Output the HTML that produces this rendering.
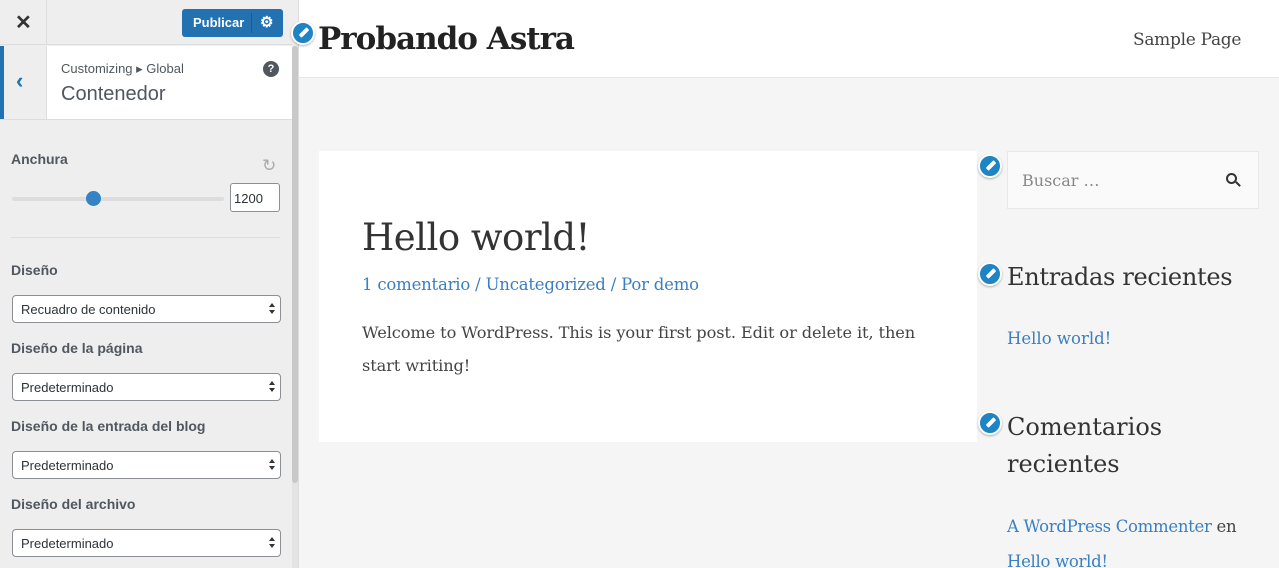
<!DOCTYPE html>
<html style="overflow:hidden;height:568px"><head><meta charset="utf-8"><style>
*{box-sizing:border-box;margin:0;padding:0}
body{width:1279px;height:568px;overflow:hidden;position:relative;font-family:"Liberation Sans",sans-serif;background:#f5f5f5}
.a{position:absolute}
.side{left:0;top:0;width:299px;height:568px;background:#eee;border-right:1px solid #ddd}
.lbl{position:absolute;left:11px;font-size:14px;font-weight:bold;color:#50575e}
.sel{position:absolute;left:12px;width:269px;height:28px;background:#fff;border:1px solid #8c8f94;border-radius:4px;font-size:13px;color:#2c3338;padding:6px 8px}
.sel:after{content:"";position:absolute;right:5px;top:7px;border:3px solid transparent;border-bottom:4px solid #333;border-top:0}
.sel:before{content:"";position:absolute;right:5px;top:14px;border:3px solid transparent;border-top:4px solid #333;border-bottom:0}
.serif{font-family:"DejaVu Serif","Liberation Serif",serif}
.pen{position:absolute;width:24px;height:24px;border-radius:50%;background:#1e84c4;border:2px solid #fff;box-shadow:0 1px 2px rgba(0,0,0,.3)}
.pen:after{content:"";position:absolute;left:9px;top:4px;width:4px;height:11px;background:#fff;transform:rotate(45deg);border-radius:1px}
a{color:#3a7fc1;text-decoration:none}
</style></head><body>
<div class="a side">
 <div class="a" style="left:0;top:0;width:292px;height:45px;border-bottom:1px solid #ddd"></div>
 <div class="a" style="left:46px;top:0;width:1px;height:45px;background:#ddd"></div>
 <div class="a" style="left:15px;top:10px;font-size:20px;color:#333;font-weight:bold">✕</div>
 <div class="a" style="left:182px;top:9px;width:101px;height:28px;background:#2271b1;border-radius:3px;color:#fff;font-size:13px;font-weight:bold;padding:6px 0 0 11px">Publicar<span style="position:absolute;left:69px;top:4px;width:1px;height:20px;background:#135e96"></span><span style="position:absolute;left:78px;top:4px;font-size:15px">⚙</span></div>
 <div class="a" style="left:0;top:46px;width:292px;height:74px;background:#fff;border-bottom:1px solid #ddd"></div>
 <div class="a" style="left:0;top:46px;width:4px;height:73px;background:#2271b1"></div>
 <div class="a" style="left:4px;top:46px;width:43px;height:73px;background:#eee;border-right:1px solid #ddd"></div>
 <div class="a" style="left:16px;top:68px;font-size:22px;color:#2271b1;font-weight:bold">‹</div>
 <div class="a" style="left:61px;top:61px;font-size:13px;color:#50575e">Customizing ▸ Global</div>
 <div class="a" style="left:61px;top:83px;font-size:20px;color:#50575e">Contenedor</div>
 <div class="a" style="left:263px;top:61px;width:16px;height:16px;border-radius:50%;background:#50575e;color:#fff;font-size:11px;font-weight:bold;text-align:center;line-height:16px">?</div>
 <div class="lbl" style="top:151px">Anchura</div>
 <div class="a" style="left:262px;top:156px;font-size:17px;color:#aaa">↻</div>
 <div class="a" style="left:12px;top:197px;width:212px;height:4px;background:#ddd;border-radius:2px"></div>
 <div class="a" style="left:86px;top:191px;width:15px;height:15px;border-radius:50%;background:#3582c4"></div>
 <div class="a" style="left:230px;top:183px;width:50px;height:29px;background:#fff;border:1px solid #8c8f94;border-radius:3px;font-size:13px;padding:7px 3px;color:#2c3338">1200</div>
 <div class="a" style="left:11px;top:237px;width:269px;height:1px;background:#ddd"></div>
 <div class="lbl" style="top:262px">Diseño</div>
 <div class="sel" style="top:295px">Recuadro de contenido</div>
 <div class="lbl" style="top:340px">Diseño de la página</div>
 <div class="sel" style="top:373px">Predeterminado</div>
 <div class="lbl" style="top:418px">Diseño de la entrada del blog</div>
 <div class="sel" style="top:451px">Predeterminado</div>
 <div class="lbl" style="top:496px">Diseño del archivo</div>
 <div class="sel" style="top:529px">Predeterminado</div>
 <div class="a" style="left:292px;top:46px;width:6px;height:522px;background:#e4e4e4"></div>
 <div class="a" style="left:292px;top:46px;width:6px;height:437px;background:#c8c8c8;border-radius:3px"></div>
</div>
<div class="a" style="left:299px;top:0;width:980px;height:78px;background:#fff;border-bottom:1px solid #e5e5e5"></div>
<div class="pen" style="left:291px;top:21px"></div>
<div class="a serif" style="left:318px;top:21px;font-size:31px;font-weight:bold;color:#222;letter-spacing:-1px">Probando Astra</div>
<div class="a serif" style="left:1133px;top:30px;font-size:17px;color:#444;letter-spacing:-0.3px">Sample Page</div>
<div class="a" style="left:319px;top:151px;width:658px;height:291px;background:#fff"></div>
<div class="a serif" style="left:362px;top:216px;font-size:37px;color:#333;letter-spacing:-0.5px">Hello world!</div>
<div class="a serif" style="left:362px;top:275px;font-size:16.5px;color:#3a7fc1;letter-spacing:-0.2px">1 comentario / Uncategorized / Por demo</div>
<div class="a serif" style="left:362px;top:316px;font-size:16.2px;color:#444;line-height:33px;width:570px;letter-spacing:-0.1px">Welcome to WordPress. This is your first post. Edit or delete it, then start writing!</div>
<div class="pen" style="left:978px;top:154px"></div>
<div class="a" style="left:1007px;top:151px;width:252px;height:58px;background:#fafafa;border:1px solid #e8e8e8"></div>
<div class="a serif" style="left:1022px;top:171px;font-size:16px;color:#888">Buscar …</div>
<div class="a" style="left:1226px;top:173px;width:11px;height:11px;border:2px solid #333;border-radius:50%"></div>
<div class="a" style="left:1235px;top:183px;width:6px;height:2px;background:#333;transform:rotate(45deg)"></div>
<div class="pen" style="left:978px;top:262px"></div>
<div class="a serif" style="left:1007px;top:263px;font-size:24px;color:#333;letter-spacing:-0.3px">Entradas recientes</div>
<div class="a serif" style="left:1007px;top:329px;font-size:16.5px"><a>Hello world!</a></div>
<div class="pen" style="left:978px;top:411px"></div>
<div class="a serif" style="left:1007px;top:409px;font-size:24px;color:#333;line-height:37px">Comentarios<br>recientes</div>
<div class="a serif" style="left:1007px;top:509px;font-size:16.5px;color:#444;line-height:35px;letter-spacing:-0.3px"><a>A WordPress Commenter</a> en<br><a>Hello world!</a></div>
</body></html>
